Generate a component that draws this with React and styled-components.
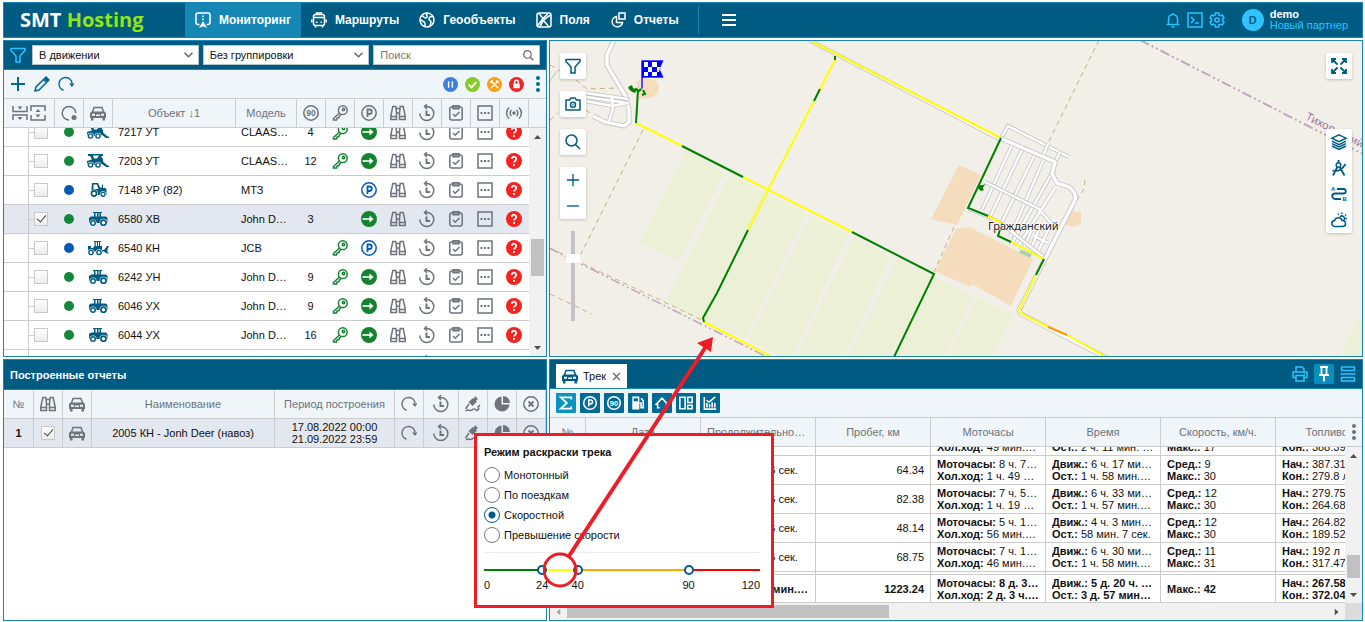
import React, { useLayoutEffect, useRef } from "react";
import styled, { createGlobalStyle, css } from "styled-components";

const c = {
  bar: "#005b82",
  line: "#1687b4",
  active: "#1687b4",
  cyan: "#2fc4ff",
  soft: "#eff5f8",
  grid: "#cccccc",
  icon: "#6e737c",
  selected: "#e3e7ef",
  green: "#14822f",
  red: "#ee1c25",
};

const GlobalStyle = createGlobalStyle`
  *, *::before, *::after { box-sizing: border-box; }
  body { margin: 0; background: #fff; }
  body, button, input, select, table {
    font-family: "Liberation Sans", Arial, sans-serif;
    font-size: 11px;
    color: #111;
  }
  button { padding: 0; border: 0; background: none; cursor: pointer; }
  svg { display: block; flex: none; }
`;

/* ---------- icons ---------- */

const glyphs = {
  monitoring: (
    <>
      <path d="M4.500 12.500H3a2 2 0 0 1-2-2V3a2 2 0 0 1 2-2h10a2 2 0 0 1 2 2v7.500a2 2 0 0 1-2 2h-1.500" />
      <path d="M8 9.500l3.500 6-3.500-1.500-3.500 1.500z" fill="currentColor" strokeWidth=".5" />
      <path d="M8 3.500v1.500M8 6.500V8" />
    </>
  ),
  bus: (
    <>
      <rect x="2.500" y="2.500" width="11" height="11" rx="2" />
      <path d="M2.500 5.500h11M5.500 2.500V1h5v1.500M.8 7.500v3M15.200 7.500v3M4.500 13.500v2M11.500 13.500v2M5 10.200h1.500M9.500 10.200H11" />
    </>
  ),
  globe: (
    <>
      <circle cx="8" cy="8" r="7" />
      <path d="M2.500 4c3 0 2 2 4 2s2-2 1-3l1-2M1.500 8c2 0 2 2 4 2 1 2 0 3 1 5M14 5c-2-1-4 0-4 2s2 1 2 3-1 2-1 4" />
    </>
  ),
  fields: (
    <>
      <rect x="1" y="1" width="14" height="14" rx="2" />
      <path d="M3 1.500l4 5-6 8M7 6.500l5-5M15 3c-5 2-9 6-11 12M8 9l5 6" />
    </>
  ),
  reports: (
    <>
      <path d="M6.500 4.500a5.200 5.200 0 1 0 6 6h-6z" />
      <path d="M9 1h6v6H9z" />
    </>
  ),
  menu: <path d="M1 3h14M1 8h14M1 13h14" strokeWidth="2" />,
  bell: <path d="M1.500 12.500h13M3.500 12.500V7a4.500 4.500 0 0 1 9 0v5.500M8 2.500V1M6.500 14.800h3" />,
  terminal: <path d="M1 1h14v14H1zM4 5l3 3-3 3M8 11h4" />,
  gear: (
    <>
      <path d="M6.500 1h3l.5 2 1.500.8 2-.6 1.500 2.600-1.500 1.400v1.600l1.500 1.400-1.500 2.600-2-.6-1.500.8-.5 2h-3L6 13l-1.500-.8-2 .6L1 10.200l1.500-1.400V7.200L1 5.800l1.500-2.600 2 .6L6 3z" />
      <circle cx="8" cy="8" r="2" />
    </>
  ),
  filter: <path d="M1 1.500h14v2L10 9v6H6V9L1 3.500z" />,
  plus: <path d="M8 1v14M1 8h14" />,
  minus: <path d="M1 8h14" />,
  pencil: (
    <>
      <path d="M1 15l1-4 7.500-7.500 3 3L5 14z" />
      <path d="M10.500 2.500L12 1l3 3-1.500 1.500z" fill="currentColor" />
    </>
  ),
  refresh: (
    <>
      <path d="M5.500 14.200A6.500 6.500 0 1 1 14 7.500" />
      <path d="M11 7.500h5.500L14 11z" fill="currentColor" stroke="none" />
    </>
  ),
  collapse: (
    <>
      <path d="M1 1v5.500h14V1M1 15v-5h14v5" />
      <path d="M5.500 1.500h5L8 4.500zM5.500 12h5L8 15z" fill="currentColor" stroke="none" />
    </>
  ),
  expand: (
    <>
      <path d="M1 6V1h14v5M1 10v5h14v-5" />
      <path d="M5.500 7h5L8 4zM5.500 9.500h5L8 12.500z" fill="currentColor" stroke="none" />
    </>
  ),
  status: (
    <>
      <path d="M8 15A6.800 6.800 0 1 1 14.800 8" />
      <circle cx="13" cy="12.500" r="2.500" fill="currentColor" stroke="none" />
    </>
  ),
  car: (
    <>
      <path d="M2.500 7l1.500-4.500h8L13.500 7" />
      <path
        d="M1.500 6.500h13L16 8v5h-1v2.500h-2.500V13h-9v2.500H1V13H0V8zM2 8.800v2h3v-2zm9 0v2h3v-2zM6 9.500v1.500h4V9.500z"
        fill="currentColor"
        stroke="none"
        fillRule="evenodd"
      />
    </>
  ),
  speed: (
    <>
      <circle cx="8" cy="8" r="7.200" />
      <text x="8" y="11" textAnchor="middle" fontSize="8.500" fontWeight="700" fill="currentColor" stroke="none">
        90
      </text>
    </>
  ),
  key: (
    <>
      <circle cx="10.800" cy="5.200" r="4.400" />
      <path d="M7.500 8L1.500 13.500v1.500h3l.5-2 2-.5.500-1.500L9 9.500" />
      <circle cx="11.500" cy="4.500" r="1.200" />
    </>
  ),
  parking: (
    <>
      <circle cx="8" cy="8" r="7.200" />
      <path d="M6.500 12V4.500h2a2.200 2.200 0 0 1 0 4.500h-2" strokeWidth="1.800" />
    </>
  ),
  binoculars: (
    <path d="M2.800 1.500h3L6.500 8v6.500H.8V11zM13.200 1.500h-3L9.500 8v6.500h5.700V11zM6 3.500h4M6.500 8h3M1 11.500h5.500M9.500 11.500H15" />
  ),
  history: (
    <>
      <path d="M.8 8.500a7 7 0 1 0 7-7H6M8 -.8L5.500 1.500 8 4" />
      <path d="M7.500 5.500V10H11" strokeWidth="2" />
    </>
  ),
  clipboard: (
    <>
      <rect x="1.800" y="2" width="12.400" height="13" rx="2" />
      <path d="M5 .8h6v3H5z" />
      <path d="M5 9l2.200 2.200L11.500 7" />
    </>
  ),
  more: (
    <>
      <path d="M1 1h14v14H1z" />
      <path d="M3.500 8h2M7 8h2M10.500 8h2" strokeWidth="2" />
    </>
  ),
  signal: (
    <>
      <circle cx="8" cy="8" r="1.700" fill="currentColor" stroke="none" />
      <path d="M5.500 5a4 4 0 0 0 0 6M10.500 5a4 4 0 0 1 0 6M3 2.500a7.500 7.500 0 0 0 0 11M13 2.500a7.500 7.500 0 0 1 0 11" />
    </>
  ),
  moving: (
    <>
      <circle cx="8" cy="8" r="8" fill="currentColor" stroke="none" />
      <path d="M1.500 8H9" stroke="#fff" strokeWidth="1.600" />
      <path d="M8.500 4.500L12.500 8l-4 3.500z" fill="#fff" stroke="none" />
    </>
  ),
  question: (
    <>
      <circle cx="8" cy="8" r="8" fill="currentColor" stroke="none" />
      <path d="M5.800 6a2.200 2.200 0 1 1 3.500 1.700C8.300 8.300 8 8.700 8 9.500M8 11v2" stroke="#fff" strokeWidth="1.800" />
    </>
  ),
  pauseBadge: (
    <>
      <circle cx="8" cy="8" r="8" fill="#3f7fe0" stroke="none" />
      <path d="M6 4.500v7M10 4.500v7" stroke="#fff" />
    </>
  ),
  okBadge: (
    <>
      <circle cx="8" cy="8" r="8" fill="#86cb2a" stroke="none" />
      <path d="M4 8l3 3 5-5.500" stroke="#fff" strokeWidth="2" />
    </>
  ),
  serviceBadge: (
    <>
      <circle cx="8" cy="8" r="8" fill="#ff9c12" stroke="none" />
      <path d="M4 4l8 8M12 4l-8 8M3.500 6L6 3.500M10.500 3.500v2h2" stroke="#fff" strokeWidth="1.800" />
    </>
  ),
  lockBadge: (
    <>
      <circle cx="8" cy="8" r="8" fill="#f4231f" stroke="none" />
      <path d="M4.500 7h7v5h-7z" fill="#fff" stroke="none" />
      <path d="M6 7V5.500a2 2 0 0 1 4 0V7" stroke="#fff" />
    </>
  ),
  search: (
    <>
      <circle cx="6.500" cy="6.500" r="5.500" />
      <path d="M10.500 10.500L15 15" />
    </>
  ),
  camera: (
    <>
      <path d="M1 4h3.500l1.500-2h4l1.500 2H15v10H1z" strokeLinejoin="round" />
      <circle cx="8" cy="8.800" r="2.500" />
      <path d="M8 8.300v1" />
    </>
  ),
  fullscreen: (
    <path
      d="M1 5V1h4M11 1h4v4M15 11v4h-4M5 15H1v-4M1.500 1.500l5 5M14.500 1.500l-5 5M14.500 14.500l-5-5M1.500 14.500l5-5"
      strokeWidth="1.800"
    />
  ),
  layers: <path d="M8 .8l7 3.400-7 3.400-7-3.400zM1 7.200l7 3.400 7-3.400M1 9.600L8 13l7-3.400M1 12l7 3.400 7-3.400" />,
  compass: (
    <>
      <circle cx="7.500" cy="5" r="2.300" />
      <path d="M7.500 2.500V0M6.300 7L2 15.500M8.700 7l4.800 8.500M1.500 10.500c5 1.500 10-1 13-6.500" strokeWidth="1.800" />
    </>
  ),
  route: (
    <>
      <path d="M6 3h6.500a2.200 2.200 0 0 1 0 4.500H4A2.500 2.500 0 0 0 4 13h6" strokeWidth="1.800" />
      <text x="0" y="4.500" fontSize="6" fontWeight="700" fill="currentColor" stroke="none">A</text>
      <text x="11.500" y="15" fontSize="6" fontWeight="700" fill="currentColor" stroke="none">B</text>
    </>
  ),
  weather: (
    <>
      <path d="M4 14.500a3 3 0 0 1-.3-6A3.800 3.800 0 0 1 11 8.500a3 3 0 0 1 1 6z" />
      <path d="M9 5a2.500 2.500 0 1 1 4 3M8 2.500L7 1.500M11 2V.5M14 3.500l1-1M14.500 6.500H16" />
    </>
  ),
  brush: (
    <>
      <path d="M10 0l3 3-2 1.500 1 1-4.500 4.500-4-4L8 2l1 .8z" fill="currentColor" stroke="none" />
      <path d="M4 8l-3.500 5M1 15c2-3 4 1 6-1s3-1 4 0 4-1 2-3l2-2" />
    </>
  ),
  pie: (
    <>
      <path d="M7.500.5a7.500 7.500 0 1 0 8 8h-8z" fill="currentColor" stroke="none" />
      <path d="M9 0a7 7 0 0 1 7 7H9z" fill="currentColor" stroke="none" />
    </>
  ),
  close: (
    <>
      <circle cx="8" cy="8" r="7.200" />
      <path d="M5.500 5.500l5 5M10.500 5.500l-5 5" strokeWidth="1.800" />
    </>
  ),
  cross: <path d="M3 3l10 10M13 3L3 13" strokeWidth="2.200" />,
  printer: <path d="M4 6V1h6l2 2v3M4 11.500H1V6h14v5.500h-3M4 9.500h8V15H4zM12 8h1" />,
  pin: (
    <path d="M4 1h8M5.500 1v7M10.500 1v7M3 9h10M8 9v6.500" strokeWidth="1.800" />
  ),
  rows: <path d="M1.500 1h13v3.500h-13zM.5 8h15M1.500 11.500h13V15h-13z" strokeLinejoin="round" />,
  sigma: <path d="M14 4V1.500H2L9 8l-7 6.500h12V12" strokeWidth="2" />,
  fuel: (
    <>
      <path d="M1.500.5h8v15h-8zM3 2.500v3.500h5V2.500z" fill="currentColor" stroke="none" fillRule="evenodd" />
      <path d="M9.500 8h2v5.500h2.500V5.500L11.500 2.500" />
    </>
  ),
  geofence: <path d="M5.500 13.500H3V9.500H1.500L8 2.500l6.500 7H13v4h-2.500" strokeWidth="1.800" />,
  board: <path d="M1 1.500h6v13H1zM10 1.500h5v6h-5zM10 10.500h5v4h-5z" />,
  chart: <path d="M1.500 1v14H15M4.500 13V8M7.500 13V9M10.500 13V7M13.500 13V8M4 5l3 2 7-6" />,
};

function Icon({ name, size = 16, width = 1.5 }) {
  return (
    <svg
      width={size}
      height={size}
      viewBox="0 0 16 16"
      fill="none"
      stroke="currentColor"
      strokeWidth={width}
      overflow="visible"
      aria-hidden="true"
    >
      {glyphs[name]}
    </svg>
  );
}

const Wheel = ({ x, y, r }) => (
  <>
    <circle cx={x} cy={y} r={r + 0.5} fill="#fff" />
    <circle cx={x} cy={y} r={r} />
    <circle cx={x} cy={y} r={r * 0.5} fill="#fff" />
  </>
);

const vehicles = {
  tractor: (
    <>
      <path d="M6 1h9v1h-1v3.500h5l1.500 1.500V12H2V7l2-1.500h3V2H6zM8.500 2v3.500H10V2zm3 0v3.500h1V2z" fillRule="evenodd" />
      <Wheel x={6} y={12} r={3} />
      <Wheel x={16.5} y={11.7} r={3.4} />
    </>
  ),
  mtz: (
    <>
      <path d="M5 1h6l2 4.500h2V2.500h1V6h2.500l1 1.500V13H4zM6.500 2.500V7h5l-1.700-4.500z" fillRule="evenodd" />
      <Wheel x={7} y={11.5} r={3.4} />
      <Wheel x={16} y={12.3} r={2.6} />
    </>
  ),
  loader: (
    <>
      <path d="M7 1h7v1h-1v4h2v4h2l3-4h2l-1.500 3v3l1.500 2-3-1-2-1.500H1V6h3v2h2l1.500-2V2H7zM8.700 2v4h1.300V2zm2.300 0v4h1V2z" fillRule="evenodd" />
      <Wheel x={4} y={12.5} r={2.8} />
      <Wheel x={12} y={12.5} r={2.8} />
    </>
  ),
  harvester: (
    <>
      <path d="M1 1h15v2h-2l2 3.500v2l4.500 4H22V14h-3l-4-3-3 1H0V8l5-1.500L3 3H1zM6 2.500l1 3h3l2-3z" fillRule="evenodd" />
      <Wheel x={3.5} y={12} r={2.8} />
      <Wheel x={11} y={12} r={2.8} />
    </>
  ),
};

function Vehicle({ kind }) {
  return (
    <svg width="22" height="16" viewBox="0 0 22 16" fill={c.bar} overflow="visible" aria-hidden="true">
      {vehicles[kind]}
    </svg>
  );
}

/* ---------- page frame ---------- */

const Page = styled.div`
  display: grid;
  grid-template-columns: 544px minmax(0, 1fr);
  grid-template-rows: 36px minmax(0, 317fr) minmax(0, 262fr);
  gap: 2px;
  height: 100vh;
  min-height: 560px;
  padding: 2px 2px 1px 3px;
`;

const Header = styled.header`
  grid-column: 1 / -1;
  display: flex;
  align-items: stretch;
  background: ${c.bar};
  border: 1px solid ${c.line};
  color: #fff;
`;

const Logo = styled.div`
  width: 181px;
  padding-left: 16px;
  font: 700 20px/34px "Open Sans", "Noto Sans", sans-serif;
  span { color: #94e312; }
`;

const Nav = styled.nav`
  display: flex;
`;

const NavLink = styled.a`
  display: flex;
  align-items: center;
  gap: 8px;
  padding: 0 10px;
  background: ${(p) => (p.$active ? c.active : "none")};
  color: #fff;
  font-size: 12px;
  font-weight: 700;
  text-decoration: none;
`;

const MenuButton = styled.button`
  align-self: center;
  margin-left: 9px;
  padding: 6px 22px;
  border-left: 1px solid ${c.line};
  color: #fff;
`;

const Account = styled.div`
  display: flex;
  align-items: center;
  gap: 6px;
  margin-left: auto;
  padding-right: 14px;
`;

const PlainButton = styled.button`
  display: grid;
  place-items: center;
  color: ${(p) => p.$color || "inherit"};
`;

const Avatar = styled.div`
  display: grid;
  place-items: center;
  width: 22px;
  height: 22px;
  margin-left: 11px;
  border-radius: 50%;
  background: ${c.cyan};
  color: ${c.bar};
  font-weight: 700;
`;

const User = styled.div`
  line-height: 11px;
  color: ${c.cyan};
  strong { display: block; color: #fff; }
`;

const Panel = styled.section`
  position: relative;
  display: flex;
  flex-direction: column;
  min-width: 0;
  min-height: 0;
  border: 1px solid ${c.line};
  background: #fff;
`;

/* ---------- filters and tool bars ---------- */

const FilterBar = styled.div`
  display: flex;
  align-items: center;
  gap: 4px;
  height: 29px;
  padding: 0 6px;
  background: ${c.bar};
  border-bottom: 1px solid ${c.line};
  color: ${c.cyan};
  > svg { margin-right: 2px; }
`;

const Field = styled.label`
  flex: 1;
  min-width: 0;
  display: flex;
  align-items: center;
  height: 20px;
  padding-right: 5px;
  background: #fff;
  border: 1px solid #b7c4cc;
  color: #666;
`;

const fieldText = css`
  flex: 1;
  min-width: 0;
  height: 18px;
  padding: 0 6px;
  border: 0;
  outline: 0;
  background: none;
  appearance: none;
`;
const Select = styled.select`${fieldText}`;
const SearchInput = styled.input`
  ${fieldText}
  &::placeholder { color: #777; opacity: 1; }
`;

const Toolbar = styled.div`
  display: flex;
  align-items: center;
  gap: ${(p) => p.$gap || 8}px;
  height: 29px;
  padding: 0 6px;
  background: ${c.soft};
  border-bottom: 1px solid ${c.grid};
  color: #00688f;
`;

const Badges = styled.div`
  display: flex;
  gap: 7px;
  margin: 0 2px 0 auto;
`;

const Dots = styled.button`
  display: flex;
  flex-direction: column;
  align-items: center;
  gap: 2px;
  width: 8px;
  margin-right: -2px;
  color: ${(p) => p.$color || "#00688f"};
  &::before, &::after, i {
    content: "";
    width: 4px;
    height: 4px;
    border-radius: 50%;
    background: currentColor;
  }
`;

const TitleBar = styled.div`
  display: flex;
  align-items: center;
  height: ${(p) => p.$height}px;
  padding: 0 4px 0 6px;
  background: ${c.bar};
  border-bottom: 1px solid ${c.line};
  color: ${c.cyan};
  h2 { margin: 0; font-size: 11px; color: #fff; }
`;

/* ---------- data tables ---------- */

const TableArea = styled.div`
  flex: 1;
  display: flex;
  min-height: 0;
  background: ${(p) => (p.$soft ? c.soft : "none")};
`;

const Scroller = styled.div`
  flex: 1;
  min-width: 0;
  overflow: auto;
  scrollbar-width: none;
  background: #fff;
`;

const Table = styled.table`
  width: 100%;
  min-width: ${(p) => p.$min || 0}px;
  table-layout: fixed;
  border-collapse: separate;
  border-spacing: 0;

  th, td {
    height: 29px;
    padding: 0;
    border-bottom: 1px solid ${c.grid};
    text-align: center;
    font-weight: 400;
    white-space: nowrap;
    overflow: hidden;
    text-overflow: ellipsis;
    line-height: 12px;
  }
  th { border-right: 1px solid ${c.grid}; }
  td { border-right: ${(p) => (p.$ruled ? `1px solid ${c.grid}` : "0")}; }
  td > svg, th > svg { margin: 0 auto; }
  ${(p) => !p.$ruled && css`
    td { padding-right: 1px; }
  `}
  thead th {
    position: sticky;
    top: 0;
    z-index: 1;
    background: ${c.soft};
    color: ${c.icon};
  }
  tfoot td {
    position: sticky;
    bottom: 0;
    background: #fff;
    border-top: 1px solid ${c.grid};
    font-weight: 700;
  }
`;

const Row = styled.tr`
  background: ${(p) => (p.$selected ? c.selected : "#fff")};
  color: ${c.icon};
`;

const TextCell = styled.td`
  && {
    padding: ${(p) => (p.$plain ? "0 7px 0 5px" : "0 6px")};
    text-align: ${(p) => p.$align || "left"};
    color: #111;
    font-weight: ${(p) => (p.$bold ? 700 : "inherit")};
  }
`;

const Line = styled.div`
  overflow: hidden;
  text-overflow: ellipsis;
  b { font-weight: 700; }
`;

const HeadIcons = styled.div`
  display: flex;
  justify-content: center;
  gap: 2px;
`;

const Branch = styled.div`
  display: flex;
  align-items: center;
  height: 28px;
  margin-left: 24px;
  border-left: 1px solid ${c.grid};
  &::before { content: ""; width: 5px; height: 1px; background: ${c.grid}; }
`;

const Check = styled.input.attrs({ type: "checkbox" })`
  appearance: none;
  display: inline-grid;
  place-items: center;
  width: 14px;
  height: 14px;
  margin: 0;
  vertical-align: middle;
  border: 1px solid #c9c9c9;
  background: linear-gradient(#fff, #ececec);
  &:checked::before {
    content: "";
    width: 5px;
    height: 9px;
    margin-top: -3px;
    border: solid #444;
    border-width: 0 1px 1px 0;
    transform: rotate(40deg);
  }
`;

const Status = styled.div`
  width: 10px;
  height: 10px;
  margin: 0 auto;
  border-radius: 50%;
  background: ${(p) => (p.$parked ? "#0659b4" : "#14883a")};
`;

const Tint = styled.div`
  color: ${(p) => p.$color};
  svg { margin: 0 auto; }
`;

/* ---------- scroll bars ---------- */

const Bar = styled.div`
  flex: 1;
  display: flex;
  flex-direction: ${(p) => (p.$across ? "row" : "column")};
  align-items: center;
  ${(p) => (p.$across ? "height" : "width")}: 17px;
  background: #f1f1f1;
`;
const BarColumn = styled.div`
  display: flex;
  flex-direction: column;
`;
const BarCap = styled.div`
  display: grid;
  place-items: center;
  height: 29px;
  background: ${c.soft};
  border-bottom: 1px solid ${c.grid};
  ${Dots} { margin: 0; }
`;
const Gap = styled.div`
  flex: ${(p) => p.$size} 1 0;
`;
const Thumb = styled.div`
  flex: ${(p) => p.$size} 1 0;
  ${(p) => (p.$across ? "height: 13px;" : "width: 13px;")}
  background: #c1c1c1;
`;
const Step = styled.button`
  display: grid;
  place-items: center;
  width: 17px;
  height: 17px;
  color: ${(p) => (p.$dim ? "#a3a3a3" : "#505050")};
  svg { transform: rotate(${(p) => p.$turn || 0}deg); }
`;
const Arrow = () => (
  <svg width="7" height="4" viewBox="0 0 7 4" fill="currentColor" aria-hidden="true">
    <path d="M0 4L3.500 0 7 4z" />
  </svg>
);

function Scrollbar({ before, thumb, after, across }) {
  return (
    <Bar $across={across}>
      <Step $turn={across ? -90 : 0} $dim={across} aria-label="Назад"><Arrow /></Step>
      <Gap $size={before} />
      <Thumb $size={thumb} $across={across} />
      <Gap $size={after} />
      <Step $turn={across ? 90 : 180} aria-label="Вперед"><Arrow /></Step>
    </Bar>
  );
}

function useScrolled(top) {
  const ref = useRef(null);
  useLayoutEffect(() => {
    ref.current.scrollTop = top;
  }, [top]);
  return ref;
}

/* ---------- objects panel ---------- */

const objects = [
  { name: "7217 УТ", model: "CLAAS TUCANO", kind: "harvester", speed: 4, key: true },
  { name: "7203 УТ", model: "CLAAS TUCANO", kind: "harvester", speed: 12, key: true },
  { name: "7148 УР (82)", model: "МТЗ", kind: "mtz", parked: true },
  { name: "6580 ХВ", model: "John Deere", kind: "tractor", speed: 3, selected: true },
  { name: "6540 КН", model: "JCB", kind: "loader", key: true, parked: true },
  { name: "6242 УН", model: "John Deere", kind: "tractor", speed: 9, key: true },
  { name: "6046 УХ", model: "John Deere", kind: "tractor", speed: 9, key: true },
  { name: "6044 УХ", model: "John Deere", kind: "tractor", speed: 16, key: true },
  { name: "6042 УХ", model: "John Deere", kind: "tractor", speed: 8, key: true },
];

const objectIcons = ["speed", "key", "parking", "binoculars", "history", "clipboard", "more", "signal"];

function ObjectsPanel() {
  const scroller = useScrolled(10);
  return (
    <Panel>
      <FilterBar>
        <Icon name="filter" />
        <Field>
          <Select aria-label="Состояние"><option>В движении</option></Select>
          <Chevron />
        </Field>
        <Field>
          <Select aria-label="Группировка"><option>Без группировки</option></Select>
          <Chevron />
        </Field>
        <Field>
          <SearchInput placeholder="Поиск" aria-label="Поиск" />
          <Icon name="search" size={11} width={1.8} />
        </Field>
      </FilterBar>
      <Toolbar>
        <PlainButton aria-label="Добавить"><Icon name="plus" width={2} /></PlainButton>
        <PlainButton aria-label="Изменить"><Icon name="pencil" /></PlainButton>
        <PlainButton aria-label="Обновить"><Icon name="refresh" /></PlainButton>
        <Badges>
          {["pauseBadge", "okBadge", "serviceBadge", "lockBadge"].map((b) => (
            <PlainButton key={b} aria-label={b}><Icon name={b} size={15} /></PlainButton>
          ))}
        </Badges>
        <Dots aria-label="Меню"><i /></Dots>
      </Toolbar>
      <TableArea>
        <Scroller ref={scroller}>
          <Table>
            <colgroup>
              <col width="51" /><col width="29" /><col width="29" /><col /><col width="61" />
              {objectIcons.map((i) => <col key={i} width="29" />)}
            </colgroup>
            <thead>
              <tr>
                <th><HeadIcons><Icon name="collapse" /><Icon name="expand" /></HeadIcons></th>
                <th><Icon name="status" /></th>
                <th><Icon name="car" /></th>
                <th>Объект ↓1</th>
                <th>Модель</th>
                {objectIcons.map((i) => <th key={i}><Icon name={i} /></th>)}
              </tr>
            </thead>
            <tbody>
              {objects.map((o) => (
                <Row key={o.name} $selected={o.selected}>
                  <td><Branch><Check defaultChecked={o.selected} aria-label={o.name} /></Branch></td>
                  <td><Status $parked={o.parked} /></td>
                  <td><Tint><Vehicle kind={o.kind} /></Tint></td>
                  <TextCell $plain>{o.name}</TextCell>
                  <TextCell $plain>{o.model}</TextCell>
                  <TextCell $plain $align="center">{o.speed}</TextCell>
                  <td>{o.key && <Tint $color={c.green}><Icon name="key" /></Tint>}</td>
                  <td>
                    <Tint $color={o.parked ? "#0659b4" : c.green}>
                      <Icon name={o.parked ? "parking" : "moving"} />
                    </Tint>
                  </td>
                  {["binoculars", "history", "clipboard", "more"].map((i) => (
                    <td key={i}><Icon name={i} /></td>
                  ))}
                  <td><Tint $color="#f4231f"><Icon name="question" /></Tint></td>
                </Row>
              ))}
            </tbody>
          </Table>
        </Scroller>
        <BarColumn>
          <BarCap />
          <Scrollbar before={94} thumb={37} after={63} />
        </BarColumn>
      </TableArea>
    </Panel>
  );
}

const Chevron = () => (
  <svg width="9" height="6" viewBox="0 0 9 6" fill="none" stroke="currentColor" strokeWidth="1.5" aria-hidden="true">
    <path d="M.5.8l4 4 4-4" />
  </svg>
);

/* ---------- map ---------- */

const MapPanel = styled(Panel)`
  overflow: hidden;
  background: #f2efe9;
  > svg { width: 100%; height: 100%; }
`;

const MapTools = styled.div`
  position: absolute;
  top: 12px;
  ${(p) => p.$side}: 10px;
  display: flex;
  flex-direction: column;
  align-items: center;
  gap: ${(p) => p.$gap}px;
`;

const ToolGroup = styled.div`
  border-radius: 2px;
  background: #fff;
  box-shadow: 0 1px 3px rgba(0, 0, 0, 0.2);
  color: ${c.bar};
  button { width: 26px; height: 26px; }
`;

const ZoomRange = styled.input.attrs({ type: "range" })`
  appearance: none;
  writing-mode: vertical-lr;
  width: 14px;
  height: 90px;
  margin: 0;
  background: linear-gradient(90deg, transparent 5px, #c3c3c3 5px 9px, transparent 9px);
  &::-webkit-slider-thumb {
    appearance: none;
    width: 14px;
    height: 9px;
    border-radius: 2px;
    background: #fff;
  }
`;

const roads = [
  "M65-2l-8 17v10l19 32 3 13v12l-5 4-19-4-12-6",
  "M36 53l42 6M36 57l42 6M36 61l26 5M62 57l1 12-4 12M62 66l16-3",
  "M257-1L451 100M451 98l7-12 61 31",
  "M498 104l-6 14M510 112l-6 12",
  "M462 105l-30 65M472 110l-33 69M484 116l-34 70M493 121l-33 76M505 128l-44 77",
  "M505 148l-38 60M435 142l54 27 16 19M480 211l10-24M487 214l12-26M474 208l10-24M484 196l14 7",
  "M419 169l20 8 13 7 45 36",
  "M450 98l55 24-3 12 5 9 12 4q8 6 6 13l-56 110 2 4 90 46",
];

const track = {
  "#ffff00": [
    "M86 83l46 23M193 137l109 55",
    "M255-2l196 100M285 20l-15 29M264 61l-46 89-20 40M154 282l68 35",
    "M438 176l14 7M461 202l33 17M486 235l-17 35 1 3 28 14M517 295l41 23",
  ],
  "#008000": [
    "M88 50l-2 33M132 106l61 31M302 192l82 42-40 83M285 16v4M270 49l-6 12M198 190l-31 63-14 25 1 4",
    "M451 98l-33 70 20 8M452 183l-4 13 13 6M494 219l-8 16M79 48l4 3 3-2 3 2 3-3M93 50l2 4-3 1M430 150l3-4-4 1",
  ],
  "#ff9900": ["M498 287l19 8"],
};

function MapView() {
  return (
    <svg viewBox="0 1 812 315" preserveAspectRatio="xMidYMid slice" fill="none" role="img" aria-label="Карта">
      <g fill="#ecf0d6">
        <path d="M137 111l38 20-46 90-40-18zM180 133l76 40-61 126-41-18-39-19zM261 175l37 20-55 121-10 1-35-16z" />
        <path d="M303 197l38 19-47 101h-48zM347 219l76 37-29 61h-96zM427 257l36 18-20 42h-46z" />
        <path d="M790 317l17-40 5 4v36zM5 42l8-8 12 8z" />
      </g>
      <g fill="#f4dcbc">
        <path d="M409 125l22 10-24 50-26-6zM406 189l13-2 64 32-22 47-39-22-2 3-35-16z" />
        <path d="M518 172l4-3 4 3 5-1v12l-7 4-10-3zM86 42l6-4 6 1 8 2 3 5-1 7-8 5-11 1z" />
      </g>
      <path d="M470 211l11 5" stroke="#a9cfb4" strokeWidth="4" />
      <path d="M0 41l7-10" stroke="#a8d2a0" />
      <g stroke="#c9b17f" strokeDasharray="5 4">
        <path d="M93 90L31 214M0 25l10 6M26 40l11 9 33-1M36 70l8 6M0 80l8-7M0 208l152 72M0 254l42 20" />
        <path d="M549 0l-52 105M404 187l-20 45M535 140l-1 9-14 22" />
      </g>
      <g stroke="#c2a6bf" strokeDasharray="10 3 2 3 2 3">
        <path d="M-1 208l218 109" strokeWidth="1.500" />
        <path d="M590 0l223 114" strokeWidth="2" />
      </g>
      {roads.map((d, i) => {
        const wide = i === 0 || i === 7;
        return (
          <g key={d}>
            <path d={d} stroke="#c4c4c4" strokeWidth={wide ? 5 : 4} />
            <path d={d} stroke="#fff" strokeWidth={wide ? 3.4 : 2.4} />
          </g>
        );
      })}
      {Object.entries(track).map(([color, lines]) => (
        <g key={color} stroke={color} strokeWidth="2">
          {lines.map((d) => <path key={d} d={d} />)}
        </g>
      ))}
      <path d="M78 47l4-2 1 3 4 2-2 3-4-2zM427 147l4-2 3 5-3 1z" fill="#008000" />
      <g>
        <path d="M91 20h23l-4 9 4 9H93v11h-2z" fill="#0000ff" stroke="#fff" strokeWidth=".6" />
        <path d="M94 22h4v5h-4zM102 22h5v5h-5zM98 27h4v5h-4zM107 27h3l-1 5h-2zM94 32h4v4h-4zM102 32h5v4h-5z" fill="#fff" />
      </g>
      <g fontFamily='"Noto Sans", sans-serif' fontSize="11" paintOrder="stroke" strokeLinejoin="round">
        <text x="438" y="190" fill="#222" stroke="#fff" strokeWidth="2" strokeOpacity=".7">
          Гражданский
        </text>
        <text transform="translate(755 79) rotate(27)" fill="#9b6f99">
          Тихорецкий район
        </text>
      </g>
    </svg>
  );
}

function MapSection() {
  return (
    <MapPanel aria-label="Карта">
      <MapView />
      <MapTools $side="left" $gap={12}>
        {["filter", "camera", "search"].map((n) => (
          <ToolGroup key={n}><PlainButton aria-label={n}><Icon name={n} /></PlainButton></ToolGroup>
        ))}
        <ToolGroup>
          <PlainButton aria-label="Приблизить"><Icon name="plus" size={14} /></PlainButton>
          <PlainButton aria-label="Отдалить"><Icon name="minus" size={14} /></PlainButton>
        </ToolGroup>
        <ZoomRange aria-label="Масштаб" defaultValue={28} />
      </MapTools>
      <MapTools $side="right" $gap={50}>
        <ToolGroup><PlainButton aria-label="На весь экран"><Icon name="fullscreen" /></PlainButton></ToolGroup>
        <ToolGroup>
          {["layers", "compass", "route", "weather"].map((n) => (
            <PlainButton key={n} aria-label={n}><Icon name={n} /></PlainButton>
          ))}
        </ToolGroup>
      </MapTools>
    </MapPanel>
  );
}

/* ---------- reports panel ---------- */

function ReportsPanel() {
  return (
    <Panel>
      <TitleBar $height={30}><h2>Построенные отчеты</h2></TitleBar>
      <TableArea>
        <Scroller>
          <Table $ruled>
            <colgroup>
              <col width="30" /><col width="29" /><col width="29" /><col /><col width="120" />
              <col width="29" /><col width="35" /><col width="29" /><col width="29" /><col width="29" />
            </colgroup>
            <thead>
              <tr>
                <th>№</th>
                <th><Icon name="binoculars" /></th>
                <th><Icon name="car" /></th>
                <th>Наименование</th>
                <th>Период построения</th>
                {["refresh", "history", "brush", "pie", "close"].map((i) => <th key={i}><Icon name={i} /></th>)}
              </tr>
            </thead>
            <tbody>
              <Row $selected>
                <TextCell $align="center" $bold>1</TextCell>
                <td><Check defaultChecked aria-label="Показать отчет" /></td>
                <td><Icon name="car" /></td>
                <TextCell $align="center">2005 КН - Jonh Deer (навоз)</TextCell>
                <TextCell $align="center">17.08.2022 00:00<br />21.09.2022 23:59</TextCell>
                {["refresh", "history", "brush", "pie", "close"].map((i) => <td key={i}><Icon name={i} /></td>)}
              </Row>
            </tbody>
          </Table>
        </Scroller>
      </TableArea>
    </Panel>
  );
}

/* ---------- track panel ---------- */

const Tab = styled.div`
  align-self: flex-end;
  display: flex;
  align-items: center;
  gap: 5px;
  height: 24px;
  padding: 0 5px 0 6px;
  background: #fff;
  color: ${c.bar};
  span { color: #111; }
  button { color: ${c.icon}; }
`;

const TitleTools = styled.div`
  display: flex;
  gap: 4px;
  margin-left: auto;
`;

const TitleTool = styled(PlainButton)`
  width: 20px;
  height: 20px;
  border-radius: 2px;
  background: ${(p) => (p.$on ? "#0a8fbd" : "none")};
  color: ${(p) => (p.$on ? "#fff" : c.cyan)};
`;

const ReportTool = styled(PlainButton)`
  width: 20px;
  height: 20px;
  border-radius: 1px;
  background: ${(p) => (p.$on ? "#0a93bd" : "#006a94")};
  color: #fff;
`;

const trackRows = [
  { day: 32, trip: "4 ч. 50 мин. 6 сек.", km: "41.12", engine: ["6 ч. 40 мин.", "49 мин. 12 сек."], time: ["4 ч. 2 мин.", "2 ч. 11 мин. 4 сек."], speed: [8, 17], fuel: ["392.1 л", "388.39 л"] },
  { day: 33, trip: "4 ч. 50 мин. 6 сек.", km: "64.34", engine: ["8 ч. 7 мин.", "1 ч. 49 мин."], time: ["6 ч. 17 мин. 5 сек.", "1 ч. 58 мин. 4 сек."], speed: [9, 30], fuel: ["387.31 л", "279.8 л"] },
  { day: 34, trip: "4 ч. 50 мин. 6 сек.", km: "82.38", engine: ["7 ч. 53 мин.", "1 ч. 19 мин."], time: ["6 ч. 33 мин. 5 сек.", "1 ч. 57 мин. 4 сек."], speed: [12, 30], fuel: ["279.75 л", "264.68 л"] },
  { day: 35, trip: "4 ч. 50 мин. 6 сек.", km: "48.14", engine: ["5 ч. 12 мин.", "56 мин. 12 сек."], time: ["4 ч. 3 мин. 5 сек.", "58 мин. 7 сек."], speed: [12, 30], fuel: ["264.82 л", "189.52 л"] },
  { day: 36, trip: "4 ч. 50 мин. 6 сек.", km: "68.75", engine: ["7 ч. 12 мин.", "46 мин. 12 сек."], time: ["6 ч. 30 мин. 5 сек.", "1 ч. 58 мин. 4 сек."], speed: [11, 31], fuel: ["192 л", "317.47 л"] },
];

const Pair = ({ labels, values, bold }) => (
  <TextCell $bold={bold}>
    {labels.map((l, i) => <Line key={l}><b>{l}:</b> {values[i]}</Line>)}
  </TextCell>
);

const reportTools = ["sigma", "parking", "speed", "fuel", "geofence", "board", "chart"];

function TrackPanel() {
  const scroller = useScrolled(20);
  return (
    <Panel>
      <TitleBar $height={29}>
        <Tab>
          <Icon name="car" />
          <span>Трек</span>
          <PlainButton aria-label="Закрыть"><Icon name="cross" size={11} /></PlainButton>
        </Tab>
        <TitleTools>
          <TitleTool aria-label="Печать"><Icon name="printer" /></TitleTool>
          <TitleTool $on aria-label="Закрепить"><Icon name="pin" /></TitleTool>
          <TitleTool aria-label="Строки"><Icon name="rows" /></TitleTool>
        </TitleTools>
      </TitleBar>
      <Toolbar $gap={4}>
        {reportTools.map((n, i) => (
          <ReportTool key={n} $on={i === 0} aria-label={n}><Icon name={n} size={14} width={1.8} /></ReportTool>
        ))}
      </Toolbar>
      <TableArea $soft>
        <Scroller ref={scroller}>
          <Table $ruled $min={841}>
            <colgroup>
              <col width="36" /><col width="115" /><col width="115" /><col width="115" />
              <col width="115" /><col width="115" /><col width="115" /><col width="115" />
            </colgroup>
            <thead>
              <tr>
                <th>№</th>
                <th>Дата</th>
                <TrimmedHead>Продолжительность</TrimmedHead>
                <th>Пробег, км</th>
                <th>Моточасы</th>
                <th>Время</th>
                <th>Скорость, км/ч.</th>
                <th>Топливо, л</th>
              </tr>
            </thead>
            <tbody>
              {trackRows.map((r) => (
                <Row key={r.day}>
                  <TextCell $align="center">{r.day}</TextCell>
                  <TextCell $align="center">{r.day - 15}.09.2022</TextCell>
                  <TextCell>{r.trip}</TextCell>
                  <TextCell $align="right">{r.km}</TextCell>
                  <Pair labels={["Моточасы", "Хол.ход"]} values={r.engine} />
                  <Pair labels={["Движ.", "Ост."]} values={r.time} />
                  <Pair labels={["Сред.", "Макс."]} values={r.speed} />
                  <Pair labels={["Нач.", "Кон."]} values={r.fuel} />
                </Row>
              ))}
              <Row>{Array.from({ length: 8 }, (_, i) => <td key={i} />)}</Row>
            </tbody>
            <tfoot>
              <tr>
                <td />
                <td />
                <TextCell $bold>7 д. 19 ч. 24 мин. 5 сек.</TextCell>
                <TextCell $bold $align="right">1223.24</TextCell>
                <Pair bold labels={["Моточасы", "Хол.ход"]} values={["8 д. 3 ч. 12 мин.", "2 д. 3 ч. 5 мин."]} />
                <Pair bold labels={["Движ.", "Ост."]} values={["5 д. 20 ч. 5 мин.", "3 д. 57 мин. 4 сек."]} />
                <Pair bold labels={["Макс."]} values={[42]} />
                <Pair bold labels={["Нач.", "Кон."]} values={["267.58 л", "372.04 л"]} />
              </tr>
            </tfoot>
          </Table>
        </Scroller>
        <BarColumn>
          <BarCap><Dots $color={c.icon} aria-label="Столбцы"><i /></Dots></BarCap>
          <Scrollbar before={90} thumb={23} after={8} />
        </BarColumn>
      </TableArea>
      <BottomBar>
        <Scrollbar across before={0} thumb={322} after={439} />
        <Corner />
      </BottomBar>
      <ColorModes />
    </Panel>
  );
}

const TrimmedHead = styled.th`
  && { padding: 0 6px; }
`;
const BottomBar = styled.div`
  display: flex;
  height: 17px;
`;
const Corner = styled.div`
  width: 17px;
  background: #dcdcdc;
`;

/* ---------- track colouring pop-up ---------- */

const Popup = styled.form`
  position: absolute;
  z-index: 3;
  left: -76px;
  top: 73px;
  width: 300px;
  height: 175px;
  padding: 10px 11px 0 7px;
  border: 3px solid ${c.red};
  background: #fff;
  h3 { margin: 0 0 7px; font-size: 11px; line-height: 12px; }
`;

const Mode = styled.label`
  display: flex;
  align-items: center;
  gap: 4px;
  height: 20px;
`;

const Radio = styled.input.attrs({ type: "radio", name: "mode" })`
  appearance: none;
  width: 16px;
  height: 16px;
  margin: 0;
  border: 1px solid #777;
  border-radius: 50%;
  background: #fff;
  &:checked {
    border-color: ${c.bar};
    background: radial-gradient(${c.bar} 3px, #fff 4px);
  }
`;

const SpeedScale = styled.div`
  position: relative;
  display: flex;
  margin-top: 7px;
  padding-top: 16px;
  border-top: 1px solid #eee;
`;

const Segment = styled.div`
  flex: ${(p) => p.$span} 1 ${(p) => (p.$edge ? 5 : 0)}px;
  display: flex;
  justify-content: space-between;
  padding-top: 8px;
  border-top: 2px solid ${(p) => p.$color};
`;

const Tick = styled.span`
  margin-left: ${(p) => (p.$start ? 0 : "auto")};
  transform: ${(p) => (p.$mid ? "translateX(50%)" : "none")};
`;

const Handle = styled.input.attrs({ type: "range", min: 0, max: 120 })`
  position: absolute;
  left: 0;
  top: 12px;
  width: 100%;
  height: 10px;
  margin: 0;
  appearance: none;
  background: none;
  pointer-events: none;
  &::-webkit-slider-thumb {
    appearance: none;
    width: 10px;
    height: 10px;
    border: 2px solid ${c.bar};
    border-radius: 50%;
    background: #fff;
    pointer-events: auto;
  }
`;

const Callout = styled.svg`
  position: absolute;
  left: 66px;
  bottom: 16px;
  pointer-events: none;
`;

const modes = ["Монотонный", "По поездкам", "Скоростной", "Превышение скорости"];
const bands = [
  { from: 0, to: 24, color: "#008000" },
  { from: 24, to: 40, color: "#ffff00" },
  { from: 40, to: 90, color: "#ffa500" },
  { from: 90, to: 120, color: "#ff0000" },
];

function ColorModes() {
  return (
    <Popup>
      <h3>Режим раскраски трека</h3>
      {modes.map((m, i) => (
        <Mode key={m}><Radio defaultChecked={i === 2} />{m}</Mode>
      ))}
      <SpeedScale>
        {bands.map((b, i) => (
          <Segment key={b.to} $span={b.to - b.from} $color={b.color} $edge={i === 0 || i === 3}>
            {i === 0 && <Tick $start>0</Tick>}
            <Tick $mid={i < 3}>{b.to}</Tick>
          </Segment>
        ))}
        {[24, 40, 90].map((v) => <Handle key={v} defaultValue={v} aria-label={`Граница ${v} км/ч`} />)}
      </SpeedScale>
      <Callout width="172" height="254" viewBox="0 0 172 254" fill="none" stroke={c.red} strokeWidth="3" aria-hidden="true">
        <circle cx="17" cy="235" r="16" />
        <path d="M26 221L164 10" strokeWidth="4" />
        <path d="M170 2l-2 15-14-9z" fill={c.red} stroke="none" />
      </Callout>
    </Popup>
  );
}

/* ---------- header ---------- */

const sections = [
  ["monitoring", "Мониторинг"],
  ["bus", "Маршруты"],
  ["globe", "Геообъекты"],
  ["fields", "Поля"],
  ["reports", "Отчеты"],
];

export default function App() {
  return (
    <>
      <GlobalStyle />
      <Page>
        <Header>
          <Logo>SMT <span>Hosting</span></Logo>
          <Nav>
            {sections.map(([icon, label], i) => (
              <NavLink key={icon} href={`#${icon}`} $active={i === 0}>
                <Icon name={icon} />
                {label}
              </NavLink>
            ))}
          </Nav>
          <MenuButton aria-label="Меню"><Icon name="menu" /></MenuButton>
          <Account>
            {["bell", "terminal", "gear"].map((n) => (
              <PlainButton key={n} $color={c.cyan} aria-label={n}><Icon name={n} /></PlainButton>
            ))}
            <Avatar>D</Avatar>
            <User><strong>demo</strong>Новый партнер</User>
          </Account>
        </Header>
        <ObjectsPanel />
        <MapSection />
        <ReportsPanel />
        <TrackPanel />
      </Page>
    </>
  );
}
